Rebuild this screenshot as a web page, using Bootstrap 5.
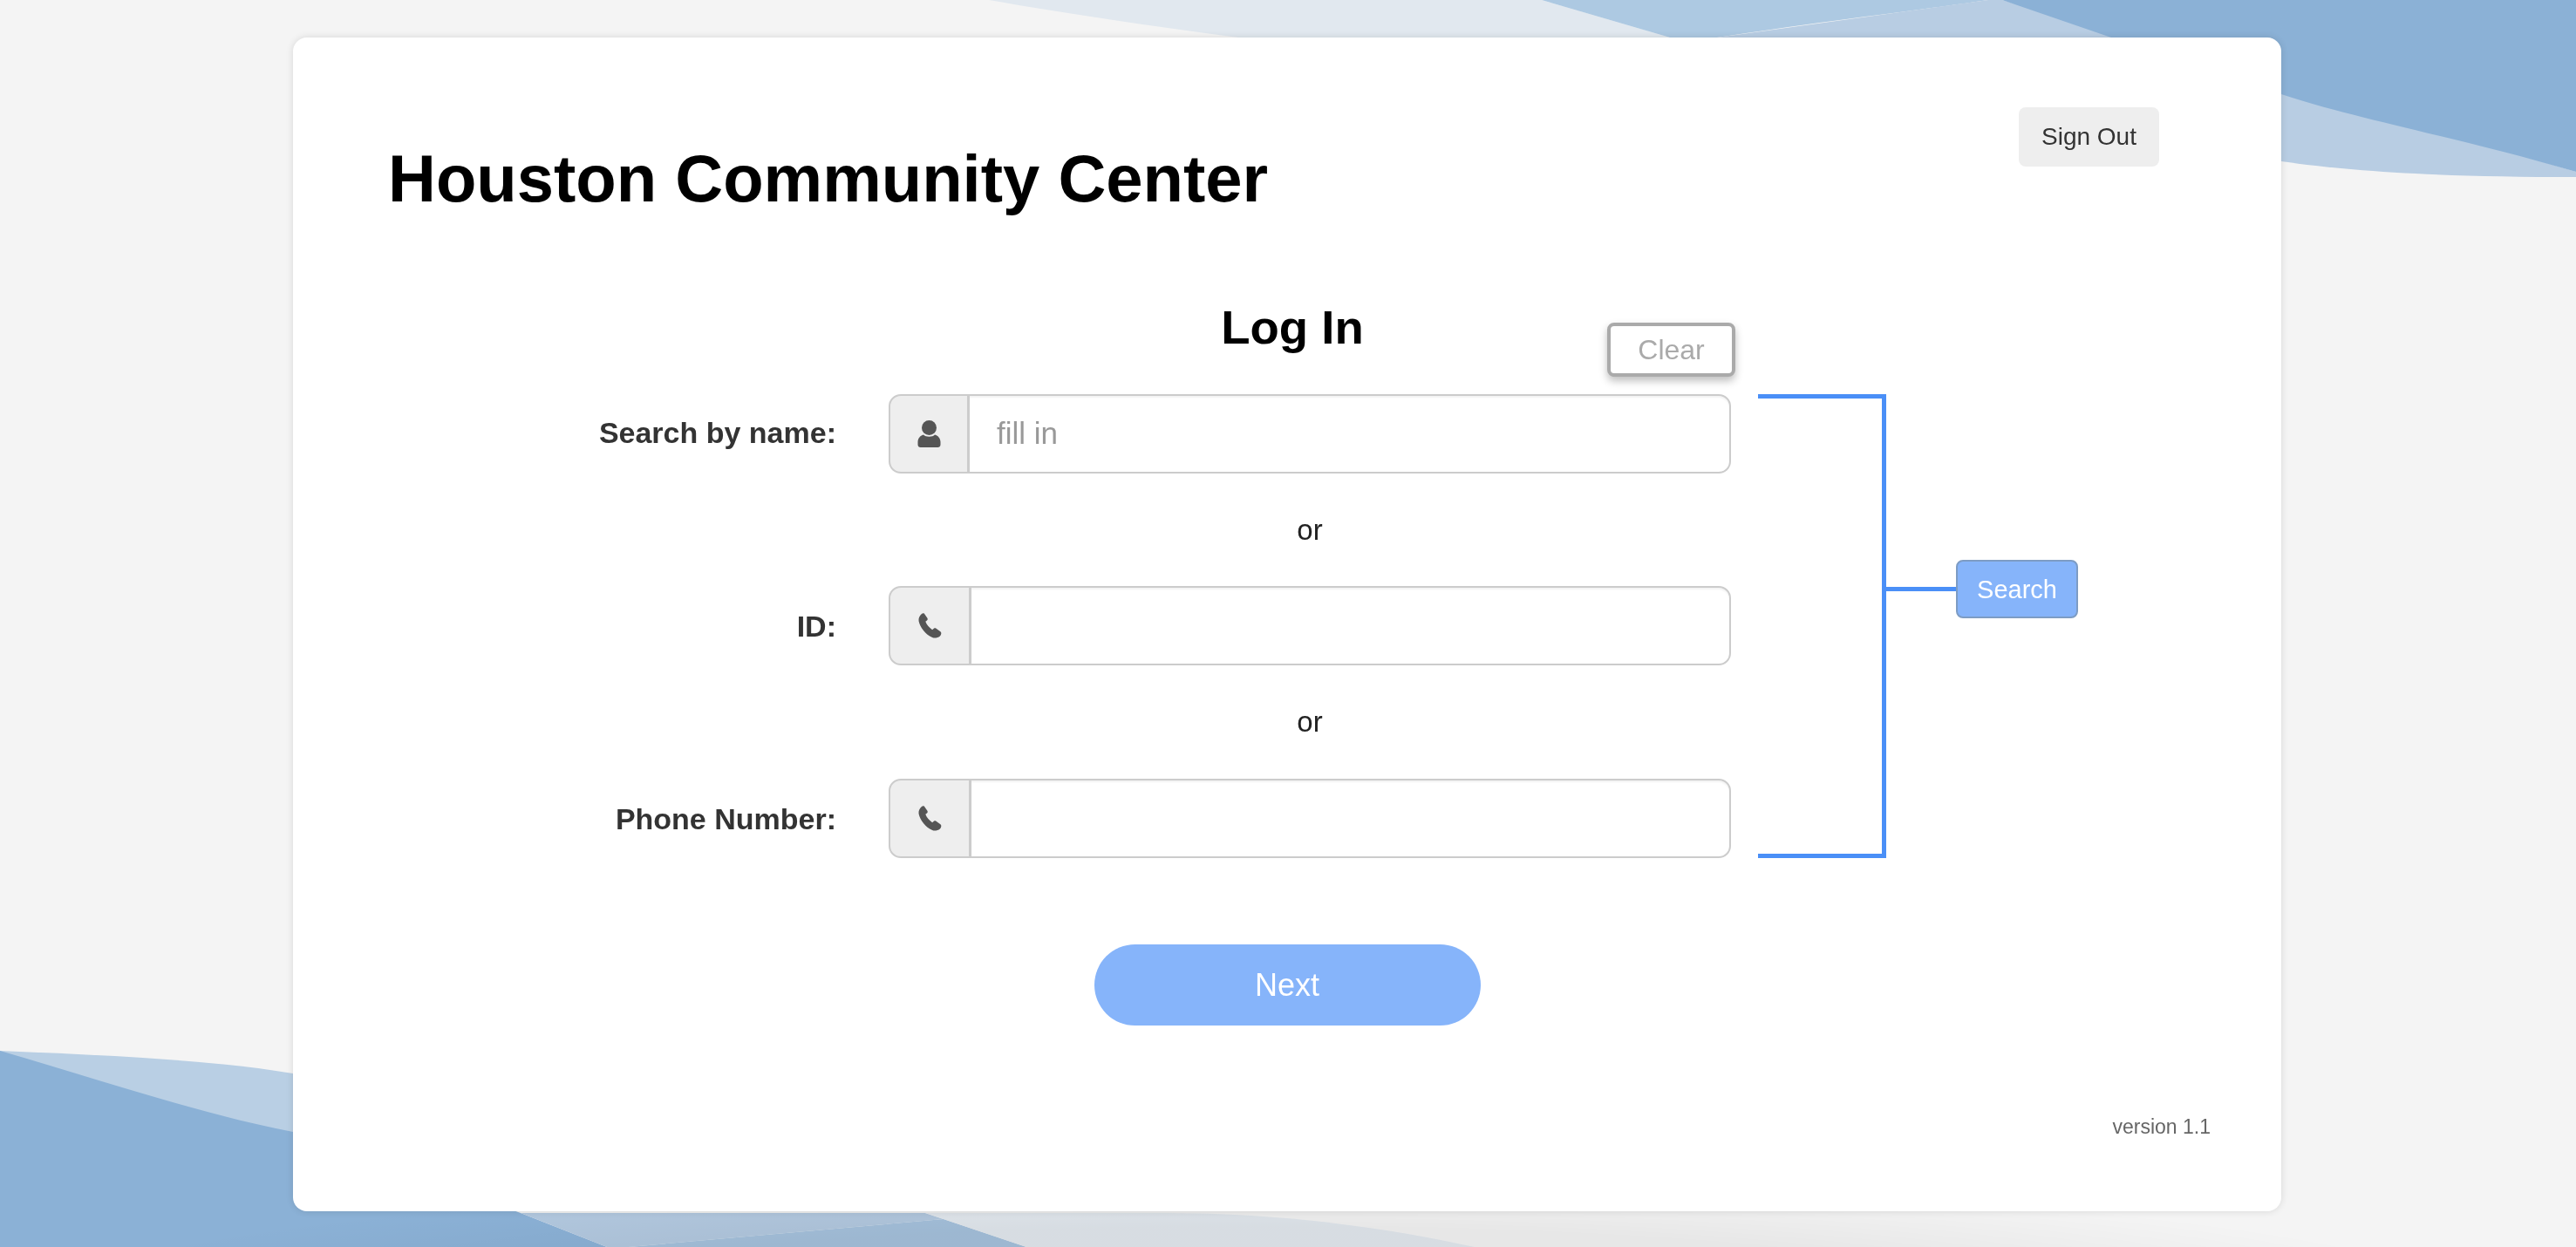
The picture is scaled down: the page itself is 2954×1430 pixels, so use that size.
<!DOCTYPE html>
<html lang="en">
<head>
    <meta charset="UTF-8">
    <meta name="viewport" content="width=device-width, initial-scale=1.0">
    <title>Houston Community Center</title>
    <link href="https://cdn.jsdelivr.net/npm/bootstrap@5.3.0/dist/css/bootstrap.min.css" rel="stylesheet">
    <style>
        html, body {
            height: 100%;
        }
        body {
            background-color: #f4f4f4;
            font-family: "Liberation Sans", Arial, sans-serif;
            overflow: hidden;
        }
        .page-waves {
            position: fixed;
            inset: 0;
            width: 100%;
            height: 100%;
        }
        .login-panel {
            position: relative;
            width: 2280px;
            margin: 43px 0 0 336px;
            padding: 80px 0 79px;
            background-color: #fff;
            border-radius: 16px;
            box-shadow: 0 0 8px rgba(0, 0, 0, .12);
        }
        .panel-head {
            padding: 0 140px 0 109px;
        }
        .site-title {
            margin: 40px 0 0;
            font-size: 76px;
            font-weight: 700;
            line-height: 84px;
            color: #000;
        }
        .btn-signout {
            width: 161px;
            height: 68px;
            padding: 0;
            font-size: 28px;
            color: #333;
            background-color: #eee;
            border: 0;
            border-radius: 8px;
        }
        .form-title {
            margin: 94px 0 41px;
            padding-left: 12px;
            font-size: 54.5px;
            font-weight: 700;
            line-height: 70px;
            color: #000;
            text-align: center;
        }
        .field-label {
            width: 623px;
            margin: 0 60px 0 0;
            font-size: 34px;
            font-weight: 700;
            line-height: 48px;
            color: #333;
            text-align: right;
        }
        .field-group {
            width: 966px;
            height: 91px;
        }
        .field-group .input-group-text {
            padding: 0 30px 0 31px;
            background-color: #eee;
            border: 2px solid #ccc;
            border-radius: 14px 0 0 14px;
        }
        .field-group .form-control {
            padding: 0 31px;
            font-size: 35px;
            color: #333;
            border: 2px solid #ccc;
            border-radius: 0 14px 14px 0;
            box-shadow: inset 0 2px 2px rgba(0, 0, 0, .05);
        }
        .field-group .form-control::placeholder {
            color: #999;
        }
        .or-text {
            width: 966px;
            height: 129px;
            margin-left: 683px;
            font-size: 33px;
            color: #222;
        }
        .or-text.or-lower {
            height: 130px;
        }
        .btn-clear {
            top: -82px;
            right: -5px;
            width: 147px;
            height: 62px;
            padding: 0;
            font-size: 32px;
            color: #aaa;
            background-color: #fff;
            border: 4px solid #aaa;
            border-radius: 8px;
            box-shadow: 0 5px 10px rgba(0, 0, 0, .25);
            z-index: 5;
        }
        .bracket {
            width: 147px;
            margin-left: 31px;
            border: 5px solid #4a8ff7;
            border-left: 0;
        }
        .search-side {
            padding-top: 190px;
        }
        .connector {
            width: 80px;
            height: 5px;
            background-color: #4a8ff7;
        }
        .btn-search {
            width: 140px;
            height: 67px;
            padding: 2px 0 0;
            font-size: 29px;
            color: #fff;
            background-color: #86b4fa;
            border: 2px solid #7d9cc4;
            border-radius: 8px;
        }
        .btn-next {
            width: 443px;
            height: 93px;
            margin-top: 99px;
            padding: 0;
            font-size: 36px;
            color: #fff;
            background-color: #86b4fa;
            border: 0;
            border-radius: 47px;
        }
        .version-text {
            margin-top: 99px;
            padding-right: 81px;
            font-size: 23px;
            color: #666;
            text-align: right;
        }
    </style>
</head>
<body>
    <!-- background waves -->
    <svg class="page-waves" viewBox="0 0 2954 1430" preserveAspectRatio="none">
        <defs>
            <radialGradient id="floorShade" cx="0.5" cy="0.5" r="0.5">
                <stop offset="0.6" stop-color="#000" stop-opacity=".05"></stop>
                <stop offset="1" stop-color="#000" stop-opacity="0"></stop>
            </radialGradient>
        </defs>
        <path fill="#e1e8ef" d="M1134 0C1220 15 1320 30 1420 43L1915 43L1768 0Z"></path>
        <path fill="#adc9e2" d="M1768 0L1915 43L1969 43C2100 23 2200 12 2280 0Z"></path>
        <path fill="#b8cde3" d="M2280 0L2296 0L2954 197L2954 203C2800 203 2700 197 2616 185L1969 43Z"></path>
        <path fill="#8bb1d6" d="M2296 0L2954 0L2954 197C2820 158 2700 136 2616 108C2560 90 2480 62 2421 43Z"></path>
        <path fill="#b9cfe4" d="M0 1205C120 1210 240 1215 336 1231L600 1400L0 1400Z"></path>
        <path fill="#8bb1d6" d="M0 1205C120 1240 240 1280 336 1298L597 1391L696 1430L0 1430Z"></path>
        <path fill="#b2c8df" d="M597 1391L696 1430L721 1430L1082 1398L1061 1391Z"></path>
        <path fill="#a5c1dc" d="M721 1430L1082 1398L1177 1430Z"></path>
        <path fill="#e2e8ee" d="M1061 1391L1177 1430L1691 1430C1600 1410 1480 1391 1336 1391Z"></path>
        <ellipse fill="url(#floorShade)" cx="1440" cy="1490" rx="1400" ry="140"></ellipse>
    </svg>

    <div class="login-panel">
        <div class="panel-head d-flex justify-content-between align-items-start">
            <h1 class="site-title">Houston Community Center</h1>
            <button type="button" class="btn btn-signout">Sign Out</button>
        </div>

        <h2 class="form-title">Log In</h2>

        <div class="d-flex align-items-stretch">
            <div class="fields-col">
                <div class="d-flex align-items-center">
                    <label class="field-label mb-1" for="nameField">Search by name:</label>
                    <div class="position-relative">
                        <div class="input-group field-group">
                            <span class="input-group-text">
                                <svg width="27" height="31" viewBox="0 0 27 31"><circle cx="13.500" cy="8.500" r="8.500" fill="#555"></circle><path fill="#555" d="M7 16.500C9.500 19.500 17.500 19.500 20 16.500C24 17.500 26.500 21 26.500 25V28C26.500 30 25 31 23.500 31H3.500C2 31 .5 30 .5 28V25C.5 21 3 17.500 7 16.500Z"></path></svg>
                            </span>
                            <input type="text" class="form-control" id="nameField" placeholder="fill in">
                        </div>
                        <button type="button" class="btn btn-clear position-absolute">Clear</button>
                    </div>
                </div>
                <div class="or-text d-flex align-items-center justify-content-center">or</div>
                <div class="d-flex align-items-center">
                    <label class="field-label" for="idField">ID:</label>
                    <div class="input-group field-group">
                        <span class="input-group-text">
                            <svg width="29" height="29" viewBox="0 0 26 28"><path fill="#555" d="M6.500 .5L10 5.500C10.600 6.500 10.400 7.500 9.600 8.200L8 9.400C9 12.500 12 16 15.500 18.600L17.200 17.200C18 16.600 19 16.600 19.800 17.200L24.500 20.500C26 21.500 25.500 24.500 24 25.500C21.500 27.500 18 28 15.500 27C8 24 2 16 .5 9C0 6 1.500 2.500 4 .8C4.700 .3 5.800 .1 6.500 .5Z"></path></svg>
                        </span>
                        <input type="text" class="form-control" id="idField">
                    </div>
                </div>
                <div class="or-text or-lower d-flex align-items-center justify-content-center">or</div>
                <div class="d-flex align-items-center">
                    <label class="field-label" for="phoneField">Phone Number:</label>
                    <div class="input-group field-group">
                        <span class="input-group-text">
                            <svg width="29" height="29" viewBox="0 0 26 28"><path fill="#555" d="M6.500 .5L10 5.500C10.600 6.500 10.400 7.500 9.600 8.200L8 9.400C9 12.500 12 16 15.500 18.600L17.200 17.200C18 16.600 19 16.600 19.800 17.200L24.500 20.500C26 21.500 25.500 24.500 24 25.500C21.500 27.500 18 28 15.500 27C8 24 2 16 .5 9C0 6 1.500 2.500 4 .8C4.700 .3 5.800 .1 6.500 .5Z"></path></svg>
                        </span>
                        <input type="text" class="form-control" id="phoneField">
                    </div>
                </div>
            </div>
            <div class="bracket"></div>
            <div class="search-side">
                <div class="d-flex align-items-center">
                    <div class="connector"></div>
                    <button type="button" class="btn btn-search">Search</button>
                </div>
            </div>
        </div>

        <div class="d-flex justify-content-center">
            <button type="button" class="btn btn-next">Next</button>
        </div>

        <div class="version-text">version 1.1</div>
    </div>

    <script src="https://cdn.jsdelivr.net/npm/bootstrap@5.3.0/dist/js/bootstrap.bundle.min.js"></script>
</body>
</html>
